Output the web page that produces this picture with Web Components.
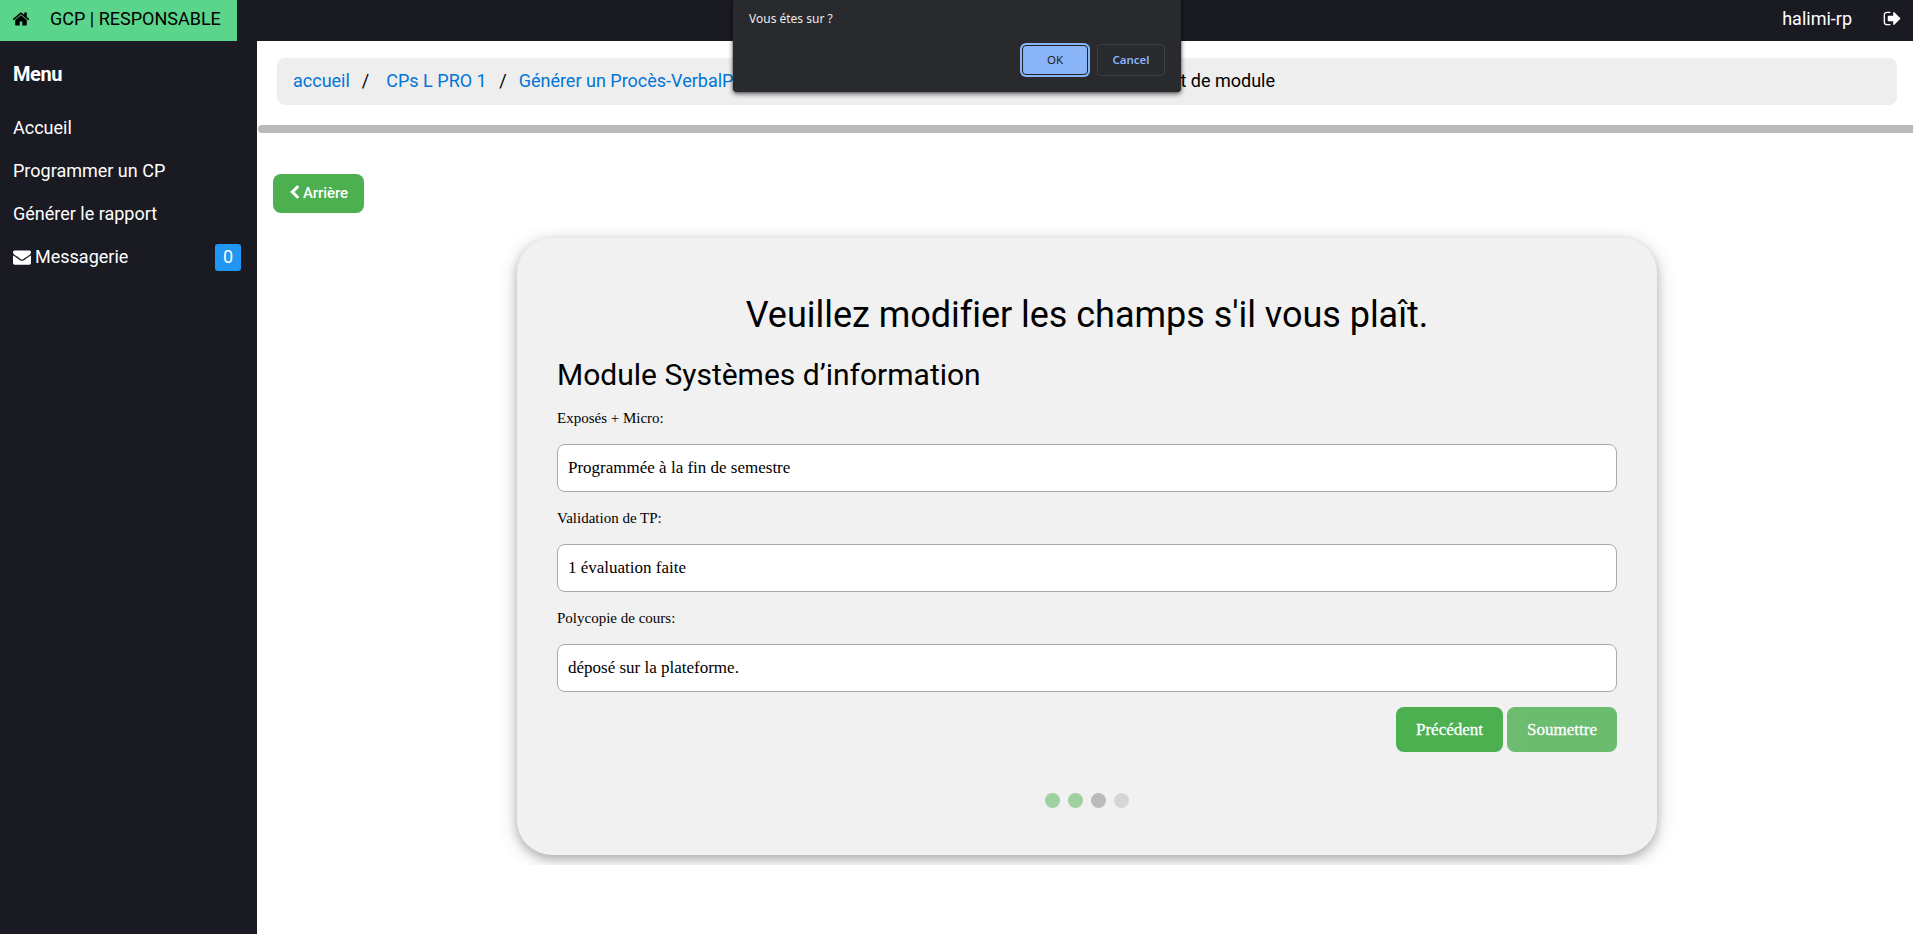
<!DOCTYPE html>
<html lang="fr">
<head>
<meta charset="utf-8">
<title>GCP | RESPONSABLE</title>
<style>
  html, body { margin: 0; height: 100%; overflow: hidden; }
  body { font-family: Roboto, sans-serif; font-size: 18px; color: #000; background: #fff; }
</style>
</head>
<body>
<gcp-app></gcp-app>
<script>
const define = (name, html) => {
  const t = document.createElement('template');
  t.innerHTML = html;
  customElements.define(name, class extends HTMLElement {
    constructor() {
      super();
      this.attachShadow({ mode: 'open' }).append(t.content.cloneNode(true));
    }
  });
};

const ICONS = {
  home: 'M1472 992v480q0 26-19 45t-45 19h-384v-384h-256v384h-384q-26 0-45-19t-19-45v-480q0-1 .5-3t.5-3l575-474 575 474q1 2 1 6zm223-69l-62 74q-8 9-21 11h-3q-13 0-21-7l-692-577-692 577q-12 8-24 7-13-2-21-11l-62-74q-8-10-7-23.5t11-21.5l719-599q32-26 76-26t76 26l244 204v-195q0-14 9-23t23-9h192q14 0 23 9t9 23v408l219 182q10 8 11 21.5t-7 23.5z',
  signout: 'M704 1440q0 4 1 20t.5 26.5-3 23.5-10 19.5-20.5 6.5h-320q-119 0-203.5-84.5t-84.5-203.5v-704q0-119 84.5-203.5t203.5-84.5h320q13 0 22.5 9.5t9.500 22.500q0 4 1 20t.5 26.5-3 23.5-10 19.500-20.500 6.500h-320q-66 0-113 47t-47 113v704q0 66 47 113t113 47h312l11.500 1 11.500 3 8 5.500 7 9 2 13.500zm928-544q0 26-19 45l-544 544q-19 19-45 19t-45-19-19-45v-288h-448q-26 0-45-19t-19-45v-384q0-26 19-45t45-19h448v-288q0-26 19-45t45-19 45 19l544 544q19 19 19 45z',
  envelope: 'M1792 710v794q0 66-47 113t-113 47h-1472q-66 0-113-47t-47-113v-794q44 49 101 87 362 246 497 345 57 42 92.500 65.500t94.500 48 110 24.500h2q51 0 110-24.500t94.500-48 92.500-65.500q170-123 498-345 57-39 100-87zm0-294q0 79-49 151t-122 123q-376 261-468 325-10 7-42.500 31t-54 38.500-52 32.500-57.500 27-50 9h-2q-23 0-50-9t-57.500-27-52-32.500-54-38.500-42.500-31q-91-64-262-182.500t-205-142.500q-62-42-117-115.500t-55-136.500q0-78 41.500-130t118.500-52h1472q65 0 112.500 47t47.500 113z',
  chevron: 'M1427 301l-531 531 531 531q19 19 19 45t-19 45l-166 166q-19 19-45 19t-45-19l-742-742q-19-19-19-45t19-45l742-742q19-19 45-19t45 19l166 166q19 19 19 45t-19 45z'
};
customElements.define('gcp-icon', class extends HTMLElement {
  constructor() { super(); this.attachShadow({ mode: 'open' }); }
  connectedCallback() {
    this.shadowRoot.innerHTML = `<style>:host{display:block;width:18px;height:18px;flex:none}svg{display:block;width:100%;height:100%;fill:currentColor}</style>
      <svg viewBox="0 0 1792 1792"><path d="${ICONS[this.getAttribute('name')]}"/></svg>`;
  }
});

define('gcp-topbar', `
<style>
  :host { display: flex; height: 41px; background: #1a1a23; color: #fff; justify-content: space-between; line-height: 37px; }
  .brand { display: flex; box-sizing: border-box; width: 237px; height: 41px; background: #5bd58b; color: #000; padding-left: 12px; }
  .brand span { margin-left: 20px; white-space: nowrap; }
  .user { display: flex; padding-right: 11px; }
  .user gcp-icon { margin: 9px 0 0 31px; width: 19px; height: 19px; }
  .brand gcp-icon { margin-top: 9.5px; }
</style>
<div class="brand"><gcp-icon name="home"></gcp-icon><span>GCP | RESPONSABLE</span></div>
<div class="user"><span>halimi-rp</span><gcp-icon name="signout"></gcp-icon></div>`);

define('gcp-menu-item', `
<style>
  :host { display: flex; height: 43px; align-items: center; padding: 0 16px 0 13px; color: #fff; }
  slot[name=badge]::slotted(*) { margin: 1px 0 0 auto; width: 26px; height: 27px; border-radius: 3px; background: #2196f3; text-align: center; line-height: 26px; }
  slot[name=icon]::slotted(*) { margin-right: 4px; }
</style>
<slot name="icon"></slot><span><slot></slot></span><slot name="badge"></slot>`);

define('gcp-sidebar', `
<style>
  :host { display: block; width: 257px; flex: none; background: #1a1a23; }
  h4 { margin: 0; padding: 18px 0 17px 13px; font-size: 20px; line-height: 30px; color: #fff; font-weight: 700; letter-spacing: -.4px; }
</style>
<h4>Menu</h4>
<nav>
<gcp-menu-item>Accueil</gcp-menu-item>
<gcp-menu-item>Programmer un CP</gcp-menu-item>
<gcp-menu-item>Générer le rapport</gcp-menu-item>
<gcp-menu-item><gcp-icon slot="icon" name="envelope"></gcp-icon>Messagerie<span slot="badge">0</span></gcp-menu-item>
</nav>`);

define('gcp-breadcrumb', `
<style>
  :host { display: flex; box-sizing: border-box; height: 47px; margin: 17px 16px 20px 20px; padding: 0 16px; background: #eee; border-radius: 8px; line-height: 45px; white-space: pre; }
  a { color: #0275d8; }
  .s1 { margin: 0 17px 0 12px; } .s2 { margin: 0 12px 0 12.5px; }
  .gap { flex: none; width: 447px; } 
</style>
<a>accueil</a><span class="s1">/</span><a>CPs L PRO 1</a><span class="s2">/</span><a>Générer un Procès-VerbalP</a><span class="gap"></span><span>t de module</span>`);

define('gcp-back', `
<style>
  :host { display: flex; box-sizing: border-box; width: 91px; height: 39px; margin: 41px 0 15px 16px; padding-left: 14px; background: #4caf50; color: #fff; border-radius: 8px; font-size: 15px; line-height: 38px; font-weight: 500; letter-spacing: -.1px; }
  gcp-icon { width: 15px; height: 15px; margin: 11px 1px 0 0; }
</style>
<gcp-icon name="chevron"></gcp-icon><span><slot></slot></span>`);

customElements.define('gcp-field', class extends HTMLElement {
  constructor() { super(); this.attachShadow({ mode: 'open' }); }
  connectedCallback() {
    this.shadowRoot.innerHTML = `
<style>
  :host { display: block; height: 100px; font-family: "Liberation Serif", serif; }
  label { display: block; height: 48px; font-size: 15px; line-height: 44px; }
  div { box-sizing: border-box; height: 48px; border: 1px solid #aaa; border-radius: 8px; background: #fff; padding: 0 10px; font-size: 17px; line-height: 46px; }
</style>
<label>${this.getAttribute('label')}</label><div><slot></slot></div>`;
  }
});

define('gcp-button', `
<style>
  :host { display: block; box-sizing: border-box; height: 45px; padding: 0 20px; border-radius: 8px; background: #4caf50; color: #fff; font: 17px/45px "Liberation Serif", serif; -webkit-text-stroke: .3px #fff; text-align: center; }
  :host([faded]) { opacity: .8; }
</style><slot></slot>`);

define('gcp-steps', `
<style>
  :host { display: flex; justify-content: center; gap: 8px; }
  i { width: 15px; height: 15px; border-radius: 50%; background: #bbb; opacity: .5; }
  .done { background: #4caf50; } .now { opacity: 1; }
</style><i class="done"></i><i class="done"></i><i class="now"></i><i></i>`);

define('gcp-form', `
<style>
  :host { display: block; overflow: hidden; padding: 10px 256px 10px 260px; }
  section { box-sizing: border-box; width: 1140px; height: 617px; padding: 0 40px; border-radius: 35px; background: #f1f1f1; box-shadow: 0 4px 10px 0 rgba(0,0,0,.2), 0 4px 20px 0 rgba(0,0,0,.19); }
  h1 { margin: 0; padding-top: 50px; height: 54px; line-height: 54px; font-size: 36px; font-weight: 400; text-align: center; letter-spacing: -.03px; }
  h2 { margin: 0; padding-top: 10px; height: 44px; line-height: 45px; font-size: 30px; font-weight: 400; }
  .actions { display: flex; justify-content: flex-end; gap: 4px; margin-top: 11px; }
  .actions :first-child { width: 107px; } .actions :last-child { width: 110px; }
  gcp-steps { margin-top: 41px; }
</style>
<section>
<h1>Veuillez modifier les champs s'il vous plaît.</h1>
<h2>Module Systèmes d’information</h2>
<gcp-field label="Exposés + Micro:">Programmée à la fin de semestre</gcp-field>
<gcp-field label="Validation de TP:">1 évaluation faite</gcp-field>
<gcp-field label="Polycopie de cours:">déposé sur la plateforme.</gcp-field>
<div class="actions"><gcp-button>Précédent</gcp-button><gcp-button faded>Soumettre</gcp-button></div>
<gcp-steps></gcp-steps>
</section>`);

define('gcp-confirm', `
<style>
  :host { position: absolute; left: 733px; top: 0; box-sizing: border-box; width: 448px; height: 92px; padding: 10px 16px; background: #292a2d; border-radius: 0 0 4px 4px; color: #e8eaed; box-shadow: 0 2px 5px rgba(0,0,0,.6), 0 0 2px rgba(0,0,0,.5); font: 12px/18px "Noto Sans", sans-serif; }
  .btns { display: flex; justify-content: flex-end; gap: 9px; margin-top: 16px; }
  button { box-sizing: border-box; width: 68px; height: 32px; border-radius: 4px; border: 1px solid #3c4043; background: none; color: #8ab4f8; padding: 0 0 1px; font: 600 11.5px "Noto Sans", sans-serif; }
  .ok { width: 66px; height: 30px; margin: 1px 0; background: #8ab4f8; color: #202124; border-color: #202124; font-weight: 400; box-shadow: 0 0 0 2px #8ab4f8; }
</style>
<div>Vous étes sur ?</div>
<div class="btns"><button class="ok">OK</button><button>Cancel</button></div>`);

define('gcp-app', `
<style>
  :host { display: flex; flex-direction: column; height: 934px; }
  .body { display: flex; flex: 1; }
  main { flex: 1; min-width: 0; }
  .rule { height: 8px; background: #bababa; border-radius: 4px 0 0 4px; margin-left: 1px; }
</style>
<gcp-topbar></gcp-topbar>
<div class="body">
<gcp-sidebar></gcp-sidebar>
<main>
<gcp-breadcrumb></gcp-breadcrumb>
<div class="rule"></div>
<gcp-back>Arrière</gcp-back>
<gcp-form></gcp-form>
</main>
</div>
<gcp-confirm></gcp-confirm>`);
</script>
</body>
</html>
